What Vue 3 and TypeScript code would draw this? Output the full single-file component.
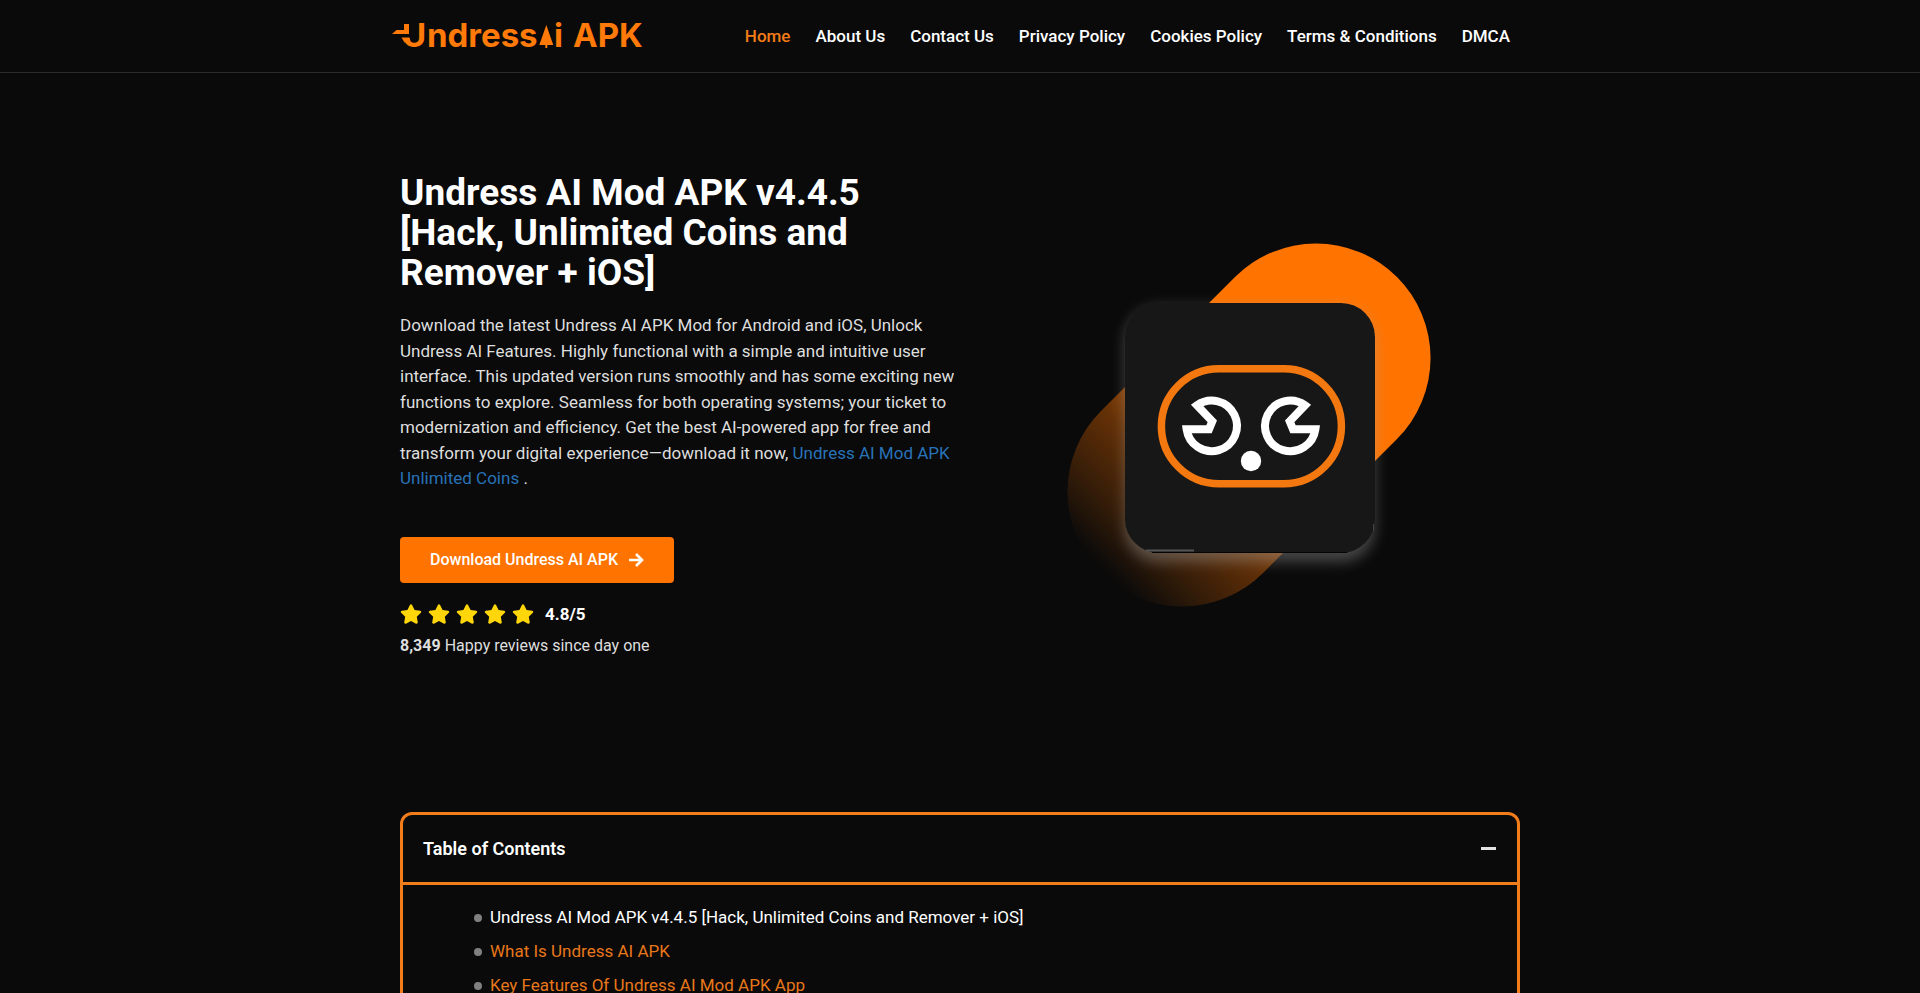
<script setup lang="ts">
interface Item {
  label: string
  active?: boolean
}

const nav: Item[] = [
  { label: 'Home', active: true },
  { label: 'About Us' },
  { label: 'Contact Us' },
  { label: 'Privacy Policy' },
  { label: 'Cookies Policy' },
  { label: 'Terms & Conditions' },
  { label: 'DMCA' },
]

const contents: Item[] = [
  { label: 'Undress AI Mod APK v4.4.5 [Hack, Unlimited Coins and Remover + iOS]', active: true },
  { label: 'What Is Undress AI APK' },
  { label: 'Key Features Of Undress AI Mod APK App' },
]
</script>

<template>
  <div class="page">
    <header class="header">
      <div class="header-inner">
        <a class="logo" href="#" aria-label="Home page">
          <svg width="256" height="48" viewBox="0 -6 256 48">
            <g class="logo-text">
              <text x="10" y="29">U</text>
              <text x="35" y="29">ndress</text>
              <text x="162" y="29">i</text>
              <text x="181" y="29">APK</text>
            </g>
            <path d="M9 4h11v16H9z" fill="#0a0a0a" />
            <path d="M12 6h5v10H0l4.500-4H12z" fill="#ff7a08" />
            <path d="M9.500 19.500h8l1 4-6 1z" fill="#ff7a08" />
            <path d="M154.300 7l7 20h-6v3h-2v-3h-6z" fill="#ff7a08" />
          </svg>
        </a>
        <nav class="nav" aria-label="Main">
          <a v-for="n in nav" :key="n.label" href="#" :class="{ active: n.active }">{{ n.label }}</a>
        </nav>
      </div>
    </header>

    <main class="container">
      <section class="hero">
        <div class="intro">
          <h1>Undress AI Mod APK v4.4.5 [Hack, Unlimited Coins and Remover + iOS]</h1>
          <p class="lead">
            Download the latest Undress AI APK Mod for Android and iOS, Unlock Undress AI Features. Highly functional
            with a simple and intuitive user interface. This updated version runs smoothly and has some exciting new
            functions to explore. Seamless for both operating systems; your ticket to modernization and efficiency. Get
            the best AI-powered app for free and transform your digital experience—download it now,
            <a href="#">Undress AI Mod APK Unlimited Coins</a> .
          </p>
          <a class="download" href="#">
            <span>Download Undress AI APK</span>
            <svg width="15" height="14" viewBox="0 0 15 14" fill="none" stroke="#fff" stroke-width="2.600" aria-hidden="true">
              <path d="M0 7h13M7 1l6 6-6 6" />
            </svg>
          </a>
          <div class="rating">
            <svg v-for="s in 5" :key="s" width="22" height="20" viewBox="0 0 576 512" aria-hidden="true">
              <path
                fill="#ffd60a"
                d="M259.300 17.800L194 150.200 47.900 171.500c-26.200 3.800-36.700 36.100-17.700 54.600l105.700 103-25 145.500c-4.500 26.300 23.200 46 46.400 33.700L288 439.600l130.700 68.700c23.200 12.200 50.900-7.400 46.400-33.700l-25-145.500 105.700-103c19-18.500 8.500-50.800-17.700-54.600L382 150.200 316.700 17.800c-11.700-23.600-45.600-23.900-57.400 0z"
              />
            </svg>
            <strong>4.8/5</strong>
          </div>
          <p class="reviews"><strong>8,349</strong> Happy reviews since day one</p>
        </div>

        <svg class="art" width="420" height="410" viewBox="0 0 420 410" role="img" aria-label="App icon">
          <defs>
            <linearGradient id="fade" gradientUnits="userSpaceOnUse" x1="239" y1="175" x2="64" y2="350">
              <stop offset="0" stop-color="#ff7300" />
              <stop offset="0.540" stop-color="#ff7300" stop-opacity="0.370" />
              <stop offset="0.820" stop-color="#ff7300" stop-opacity="0.160" />
              <stop offset="1" stop-color="#ff7300" stop-opacity="0" />
            </linearGradient>
            <filter id="soft" x="-20%" y="-20%" width="140%" height="140%">
              <feGaussianBlur stdDeviation="7" />
            </filter>
          </defs>
          <path d="M61 191L195 57A114.500 114.500 0 0 1 357 219L223 353A114.500 114.500 0 0 1 61 191z" fill="url(#fade)" />
          <rect x="85" y="87" width="250" height="255" rx="34" fill="#a8a8a8" opacity="0.380" filter="url(#soft)" />
          <rect x="85" y="83" width="250" height="250" rx="34" fill="#171717" />
          <path d="M112 332.500h195" stroke="#050505" />
          <path d="M106 330.500h48" stroke="#555" stroke-width="2" />
          <path d="M333.500 304v7" stroke="#444" />
          <rect x="121.400" y="148.700" width="180" height="115" rx="57.500" fill="none" stroke="#f47810" stroke-width="7.500" />
          <g fill="none" stroke="#fff" stroke-width="8">
            <path d="M157 185.300A25.300 25.300 0 1 1 146.600 209.300H169L172.300 201.300z" />
            <path d="M265 185.300A25.300 25.300 0 1 0 275.400 209.300H253L249.700 201.300z" />
          </g>
          <circle cx="211" cy="241" r="10.200" fill="#fff" />
        </svg>
      </section>

      <section class="toc">
        <div class="toc-head">
          <h2>Table of Contents</h2>
          <button type="button" aria-label="Close table of contents"><span></span></button>
        </div>
        <ul>
          <li v-for="c in contents" :key="c.label">
            <a href="#" :class="{ active: c.active }">{{ c.label }}</a>
          </li>
        </ul>
      </section>
    </main>
  </div>
</template>

<style>
body {
  margin: 0;
  background: #0a0a0a;
}
</style>

<style scoped>
.page {
  height: 100vh;
  overflow: hidden;
  background: #0a0a0a;
  color: #fff;
  font: 400 17px/1.5 Roboto, 'Liberation Sans', sans-serif;
}
.page * {
  box-sizing: border-box;
}
a {
  text-decoration: none;
}
.header {
  border-bottom: 1px solid #2b2b2b;
}
.header-inner {
  display: flex;
  align-items: center;
  justify-content: space-between;
  max-width: 1136px;
  height: 72px;
  margin: 0 auto;
}
.logo {
  display: flex;
}
.logo-text {
  font: 700 33px Inter, sans-serif;
  fill: #ff7a08;
}
.nav {
  display: flex;
  gap: 25px;
  padding: 2px 18px 0 0;
}
.nav a {
  color: #fff;
  font-weight: 500;
}
.nav a.active {
  color: #f47b16;
}
.container {
  max-width: 1120px;
  margin: 0 auto;
}
.hero {
  display: grid;
  grid-template-columns: 28fr 27fr;
  gap: 20px;
  align-items: start;
  padding: 100px 0 154px;
}
h1 {
  margin: 0;
  font-size: 37px;
  font-weight: 700;
  line-height: 40px;
}
.lead {
  margin: 20px 0 45px;
  color: #dedede;
}
.lead a {
  color: #2872b8;
}
.download {
  display: inline-flex;
  align-items: center;
  gap: 11px;
  height: 46px;
  padding: 0 30px;
  border-radius: 4px;
  background: #ff7300;
  color: #fff;
  font-size: 16px;
  font-weight: 500;
  vertical-align: top;
}
.rating {
  display: flex;
  align-items: center;
  gap: 6px;
  margin-top: 19px;
}
.rating strong {
  margin-left: 5px;
  font-weight: 700;
}
.reviews {
  margin: 7px 0 0;
  color: #dedede;
  font-size: 16px;
}
.art {
  justify-self: center;
  margin-top: 47px;
}
.toc {
  border: 3px solid #f07d1a;
  border-radius: 12px;
}
.toc-head {
  display: flex;
  align-items: center;
  justify-content: space-between;
  height: 70px;
  padding: 0 20px;
  border-bottom: 3px solid #f07d1a;
}
h2 {
  margin: 0;
  font-size: 18px;
  font-weight: 600;
}
.toc-head button {
  padding: 8px 1px;
  border: 0;
  background: none;
}
.toc-head button span {
  display: block;
  width: 15px;
  height: 3px;
  background: #e2e2e2;
}
ul {
  margin: 0;
  padding: 16px 20px 20px 71px;
  list-style: none;
}
li {
  display: flex;
  align-items: center;
  gap: 8px;
  height: 34px;
}
li::before {
  content: '';
  width: 8px;
  height: 8px;
  border-radius: 50%;
  background: #808080;
}
li a {
  color: #e8771a;
}
li a.active {
  color: #fff;
}
</style>
